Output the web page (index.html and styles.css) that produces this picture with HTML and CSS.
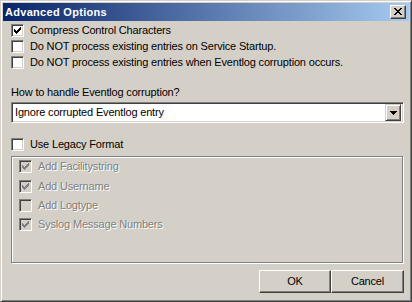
FILE: index.html
```html
<!DOCTYPE html>
<html>
<head>
<meta charset="utf-8">
<title>Advanced Options</title>
<link rel="stylesheet" href="styles.css">
</head>
<body>
<div class="window">
  <div class="titlebar">
    <span class="title">Advanced Options</span>
    <span class="close"><svg width="8" height="7" viewBox="0 0 8 7" shape-rendering="crispEdges"><path fill="#000" d="M0 0h2v1H0z M6 0h2v1H6z M1 1h2v1H1z M5 1h2v1H5z M2 2h4v1H2z M3 3h2v1H3z M2 4h4v1H2z M1 5h2v1H1z M5 5h2v1H5z M0 6h2v1H0z M6 6h2v1H6z"/></svg></span>
  </div>
  <div class="body">
    <div class="checks">
      <div class="check"><span class="box"><svg class="mark" width="7" height="7" viewBox="0 0 7 7" shape-rendering="crispEdges"><path d="M0 2h1v3H0z M1 3h1v3H1z M2 4h1v3H2z M3 3h1v3H3z M4 2h1v3H4z M5 1h1v3H5z M6 0h1v3H6z"/></svg></span><span class="text">Compress Control Characters</span></div>
      <div class="check"><span class="box"></span><span class="text">Do NOT process existing entries on Service Startup.</span></div>
      <div class="check"><span class="box"></span><span class="text">Do NOT process existing entries when Eventlog corruption occurs.</span></div>
    </div>
    <div class="field-label">How to handle Eventlog corruption?</div>
    <div class="select">
      <span class="select-value">Ignore corrupted Eventlog entry</span>
      <span class="drop"><svg width="7" height="4" viewBox="0 0 7 4" shape-rendering="crispEdges"><path fill="#000" d="M0 0h7v1H0z M1 1h5v1H1z M2 2h3v1H2z M3 3h1v1H3z"/></svg></span>
    </div>
    <div class="check legacy"><span class="box"></span><span class="text">Use Legacy Format</span></div>
    <div class="group">
      <div class="check disabled"><span class="box"><svg class="mark" width="7" height="7" viewBox="0 0 7 7" shape-rendering="crispEdges"><path d="M0 2h1v3H0z M1 3h1v3H1z M2 4h1v3H2z M3 3h1v3H3z M4 2h1v3H4z M5 1h1v3H5z M6 0h1v3H6z"/></svg></span><span class="text">Add Facilitystring</span></div>
      <div class="check disabled"><span class="box"><svg class="mark" width="7" height="7" viewBox="0 0 7 7" shape-rendering="crispEdges"><path d="M0 2h1v3H0z M1 3h1v3H1z M2 4h1v3H2z M3 3h1v3H3z M4 2h1v3H4z M5 1h1v3H5z M6 0h1v3H6z"/></svg></span><span class="text">Add Username</span></div>
      <div class="check disabled"><span class="box"></span><span class="text">Add Logtype</span></div>
      <div class="check disabled"><span class="box"><svg class="mark" width="7" height="7" viewBox="0 0 7 7" shape-rendering="crispEdges"><path d="M0 2h1v3H0z M1 3h1v3H1z M2 4h1v3H2z M3 3h1v3H3z M4 2h1v3H4z M5 1h1v3H5z M6 0h1v3H6z"/></svg></span><span class="text">Syslog Message Numbers</span></div>
    </div>
    <div class="buttons">
      <span class="btn btn-ok">OK</span>
      <span class="btn btn-cancel">Cancel</span>
    </div>
  </div>
</div>
</body>
</html>
```
FILE: styles.css
```css
* { box-sizing: border-box; }
html, body { margin: 0; padding: 0; background: #d4d0c8; }
body {
  font-family: "Liberation Sans", Arial, sans-serif;
  font-size: 11px;
  letter-spacing: -0.17px;
  color: #000;
}
.window {
  width: 412px;
  height: 302px;
  background: #d4d0c8;
  border: 1px solid;
  border-color: #d4d0c8 #404040 #404040 #d4d0c8;
  box-shadow: inset 1px 1px 0 #fff, inset -1px -1px 0 #808080;
  padding: 2px;
  display: flex;
  flex-direction: column;
}
.titlebar {
  height: 18px;
  flex: none;
  background: linear-gradient(to right, #0a246a, #a6caf0);
  display: flex;
  align-items: center;
  padding: 0 3px 0 2px;
}
.title {
  flex: 1;
  color: #fff;
  font-weight: bold;
  letter-spacing: 0.3px;
  line-height: 18px;
  white-space: nowrap;
}
.close {
  width: 16px;
  height: 14px;
  background: #d4d0c8;
  border: 1px solid;
  border-color: #fff #404040 #404040 #fff;
  box-shadow: inset -1px -1px 0 #808080;
  display: flex;
  align-items: center;
  justify-content: center;
  padding: 0 1px 1px 0;
}
.close svg { display: block; }
.body {
  flex: 1;
  display: flex;
  flex-direction: column;
  padding: 3px 5px 0 8px;
}
.check {
  display: flex;
  align-items: flex-start;
  height: 16px;
  flex: none;
}
.box {
  width: 13px;
  height: 13px;
  flex: none;
  background: #fff;
  border: 1px solid;
  border-color: #808080 #fff #fff #808080;
  box-shadow: inset 1px 1px 0 #404040, inset -1px -1px 0 #d4d0c8;
}
.mark {
  display: block;
  margin: 2px 0 0 2px;
  fill: #000;
}
.text {
  margin-left: 6px;
  line-height: 13px;
  white-space: nowrap;
}
.field-label {
  margin-top: 14px;
  line-height: 13px;
  height: 13px;
  white-space: nowrap;
}
.select {
  margin-top: 3px;
  height: 21px;
  flex: none;
  display: flex;
  align-items: center;
  background: #fff;
  border: 1px solid;
  border-color: #808080 #fff #fff #808080;
  box-shadow: inset 1px 1px 0 #404040, inset -1px -1px 0 #d4d0c8;
  padding: 2px;
}
.select-value {
  flex: 1;
  padding-left: 1px;
  line-height: 13px;
  white-space: nowrap;
}
.drop {
  width: 16px;
  height: 17px;
  flex: none;
  background: #d4d0c8;
  border: 1px solid;
  border-color: #d4d0c8 #404040 #404040 #d4d0c8;
  box-shadow: inset 1px 1px 0 #fff, inset -1px -1px 0 #808080;
  display: flex;
  align-items: center;
  justify-content: center;
}
.drop svg { display: block; }
.legacy { margin-top: 15px; }
.group {
  margin-top: 2px;
  margin-right: 1px;
  height: 107px;
  flex: none;
  border: 1px solid #808080;
  box-shadow: inset 1px 1px 0 #fff, 1px 1px 0 #fff;
  padding: 3px 0 0 7px;
}
.group .check { height: 19px; }
.group .check:first-child { height: 20px; }
.disabled .box { background: #d4d0c8; }
.disabled .mark { fill: #808080; }
.disabled .text {
  color: #808080;
  text-shadow: 1px 1px 0 #fff;
}
.buttons {
  margin-top: 7px;
  display: flex;
  justify-content: flex-end;
}
.btn {
  height: 23px;
  display: flex;
  align-items: center;
  justify-content: center;
  background: #d4d0c8;
  border: 1px solid;
  border-color: #fff #404040 #404040 #fff;
  box-shadow: inset -1px -1px 0 #808080;
  padding-bottom: 1px;
}
.btn-ok { width: 72px; }
.btn-cancel { width: 73px; }
```
